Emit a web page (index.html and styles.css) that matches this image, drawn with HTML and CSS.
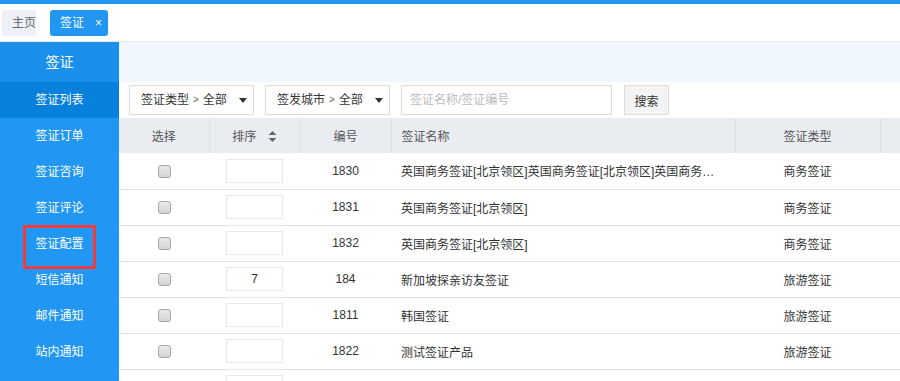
FILE: index.html
```html
<!DOCTYPE html>
<html lang="zh-CN">
<head>
    <meta charset="UTF-8">
    <meta name="viewport" content="width=device-width, initial-scale=1.0">
    <title>签证列表</title>
    <link rel="stylesheet" href="styles.css">
</head>
<body>
    <div class="topbar"></div>
    <div class="tabs">
        <span class="tab">主页</span>
        <span class="tab active">签证<i class="close">×</i></span>
    </div>
    <div class="layout">
        <aside class="sidebar">
            <div class="side-title">签证</div>
            <a class="side-item current">签证列表</a>
            <a class="side-item">签证订单</a>
            <a class="side-item">签证咨询</a>
            <a class="side-item">签证评论</a>
            <a class="side-item marked">签证配置</a>
            <a class="side-item">短信通知</a>
            <a class="side-item">邮件通知</a>
            <a class="side-item">站内通知</a>
        </aside>
        <main class="main">
            <div class="strip"></div>
            <div class="toolbar">
                <div class="dropdown">签证类型 <span class="gt">&gt;</span> 全部 <span class="caret"></span></div>
                <div class="dropdown">签发城市 <span class="gt">&gt;</span> 全部 <span class="caret"></span></div>
                <input class="search" type="text" placeholder="签证名称/签证编号">
                <button class="btn">搜索</button>
            </div>
            <table class="grid">
                <colgroup>
                    <col style="width:90px">
                    <col style="width:91px">
                    <col style="width:91px">
                    <col style="width:344px">
                    <col style="width:145px">
                    <col style="width:120px">
                </colgroup>
                <thead>
                    <tr>
                        <th>选择</th>
                        <th>排序 <svg class="sort" width="9" height="11" viewBox="0 0 9 11"><path d="M4.5 0L8.5 4H0.5Z M4.5 11L0.5 7H8.5Z" fill="#666"/></svg></th>
                        <th>编号</th>
                        <th class="left">签证名称</th>
                        <th>签证类型</th>
                        <th></th>
                    </tr>
                </thead>
                <tbody>
                    <tr><td><input type="checkbox" class="chk"></td><td><input class="order" type="text" value=""></td><td>1830</td><td class="left name">英国商务签证[北京领区]英国商务签证[北京领区]英国商务签证[北京领区]</td><td>商务签证</td><td></td></tr>
                    <tr><td><input type="checkbox" class="chk"></td><td><input class="order" type="text" value=""></td><td>1831</td><td class="left name">英国商务签证[北京领区]</td><td>商务签证</td><td></td></tr>
                    <tr><td><input type="checkbox" class="chk"></td><td><input class="order" type="text" value=""></td><td>1832</td><td class="left name">英国商务签证[北京领区]</td><td>商务签证</td><td></td></tr>
                    <tr><td><input type="checkbox" class="chk"></td><td><input class="order" type="text" value="7"></td><td>184</td><td class="left name">新加坡探亲访友签证</td><td>旅游签证</td><td></td></tr>
                    <tr><td><input type="checkbox" class="chk"></td><td><input class="order" type="text" value=""></td><td>1811</td><td class="left name">韩国签证</td><td>旅游签证</td><td></td></tr>
                    <tr><td><input type="checkbox" class="chk"></td><td><input class="order" type="text" value=""></td><td>1822</td><td class="left name">测试签证产品</td><td>旅游签证</td><td></td></tr>
                    <tr><td><input type="checkbox" class="chk"></td><td><input class="order" type="text" value=""></td><td></td><td class="left name"></td><td></td><td></td></tr>
                </tbody>
            </table>
        </main>
    </div>
</body>
</html>
```

FILE: styles.css
```css
* { box-sizing: border-box; }
body { margin: 0; font-family: "Liberation Sans", "Noto Sans CJK SC", sans-serif; font-size: 12px; color: #333; background: #fff; overflow: hidden; }

.topbar { height: 4px; background: #2196f3; }
.tabs { height: 38px; padding: 6px 2px 0; display: flex; gap: 14px; border-bottom: 1px solid #e6e6e6; }
.tab { width: 34px; height: 26px; line-height: 26px; padding-left: 10px; background: #eef0f8; color: #666; border-radius: 3px; font-size: 12px; white-space: nowrap; }
.tab.active { width: 58px; background: #2196f3; color: #fff; }
.close { font-style: normal; margin-left: 11px; font-size: 12px; }

.layout { display: flex; height: 340px; }
.sidebar { width: 119px; flex: none; background: #2196f3; }
.side-title { height: 40px; line-height: 40px; text-align: center; color: #fff; font-size: 14px; background: #1a8fec; }
.side-item { display: block; height: 36px; line-height: 37px; text-align: center; color: #fff; font-size: 12px; position: relative; }
.side-item.current { background: #0881dd; }
.side-item.marked::after { content: ""; position: absolute; left: 23px; top: -1px; width: 67px; height: 38px; border: 3px solid #f43b3b; }

.main { flex: 1; overflow: hidden; }
.strip { height: 40px; background: #f0f7ff; }
.toolbar { height: 36px; display: flex; align-items: flex-start; padding: 3px 10px 0; gap: 11px; }
.dropdown { width: 125px; height: 30px; line-height: 28px; border: 1px solid #ddd; padding: 0 11px; color: #333; display: flex; align-items: center; gap: 4px; white-space: nowrap; }
.gt { font-size: 10px; color: #666; }
.caret { margin-left: 8px; width: 0; height: 0; border-left: 4px solid transparent; border-right: 4px solid transparent; border-top: 5px solid #333; }
.search { width: 211px; height: 30px; border: 1px solid #ddd; padding: 0 8px; font-family: inherit; font-size: 12px; outline: none; }
.search::placeholder { color: #bbb; }
.btn { height: 30px; width: 45px; margin-left: 1px; border: 1px solid #ddd; background: #f4f4f4; color: #333; font-family: inherit; font-size: 12px; padding: 0; }

.grid { border-collapse: collapse; table-layout: fixed; width: 881px; }
.grid th { height: 35px; background: #e9ecf0; color: #555; font-weight: normal; text-align: center; border-right: 1px solid #dcdfe4; }
.grid td { height: 36px; text-align: center; border-bottom: 1px solid #e3e3e3; color: #333; }
.grid .left { text-align: left; padding-left: 10px; }
.grid .name { padding-right: 18px; white-space: nowrap; overflow: hidden; text-overflow: ellipsis; }
.sort { margin-left: 8px; vertical-align: -1px; }

.chk { appearance: none; -webkit-appearance: none; width: 13px; height: 13px; margin: 0; vertical-align: middle; border: 1px solid #a8a8a8; border-radius: 3px; background: linear-gradient(#e8e8e8, #d6d6d6); }
.order { width: 57px; height: 24px; border: 1px solid #e8e8e8; text-align: center; font-family: inherit; font-size: 12px; color: #333; outline: none; vertical-align: middle; }
```
